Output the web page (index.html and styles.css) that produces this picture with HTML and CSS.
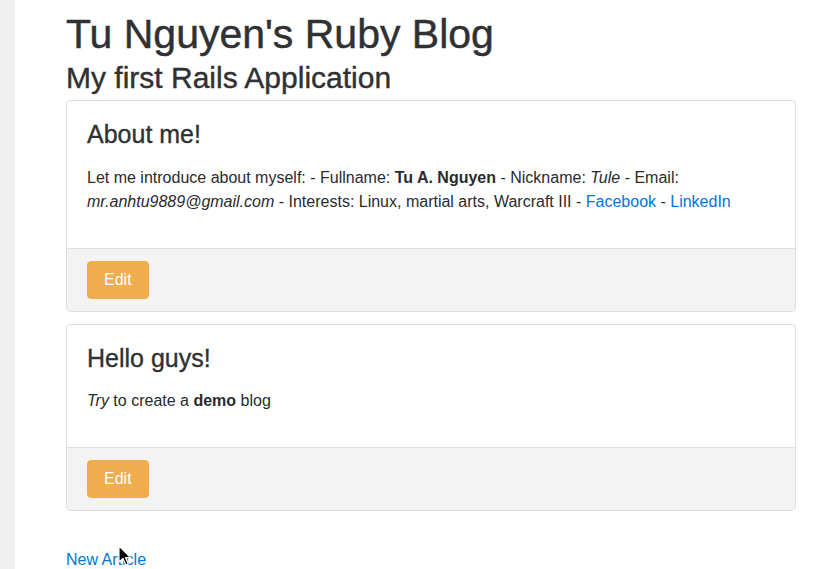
FILE: index.html
```html
<!DOCTYPE html>
<html>
<head>
<meta charset="utf-8">
<title>Tu Nguyen's Ruby Blog</title>
<link rel="stylesheet" href="styles.css">
</head>
<body>
<div class="page">
  <div class="strip"></div>
  <main class="container">
    <h1 class="site-title">Tu Nguyen's Ruby Blog</h1>
    <h2 class="site-sub">My first Rails Application</h2>

    <div class="card">
      <div class="card-body">
        <h4 class="card-title">About me!</h4>
        <p class="card-text">Let me introduce about myself: - Fullname: <strong>Tu A. Nguyen</strong> - Nickname: <em>Tule</em> - Email: <em>mr.anhtu9889@gmail.com</em> - Interests: Linux, martial arts, Warcraft III - <a href="#">Facebook</a> - <a href="#">LinkedIn</a></p>
      </div>
      <div class="card-footer">
        <a class="btn" href="#">Edit</a>
      </div>
    </div>

    <div class="card">
      <div class="card-body">
        <h4 class="card-title">Hello guys!</h4>
        <p class="card-text"><em>Try</em> to create a <strong>demo</strong> blog</p>
      </div>
      <div class="card-footer">
        <a class="btn" href="#">Edit</a>
      </div>
    </div>

    <p class="new-link"><a href="#">New Article</a></p>
  </main>
</div>
<svg class="cursor" width="14" height="22" viewBox="0 0 14 22" xmlns="http://www.w3.org/2000/svg">
  <path d="M1 1 L1 17 L5 13.5 L7.8 20 L10.2 19 L7.5 12.6 L12.5 12.6 Z" fill="#000" stroke="#fff" stroke-width="1.2" stroke-linejoin="round"/>
</svg>
</body>
</html>
```

FILE: styles.css
```css
html, body {
  margin: 0;
  padding: 0;
  background: #fff;
}

body {
  font-family: "Liberation Sans", Arial, Helvetica, sans-serif;
  font-size: 16px;
  line-height: 1.5;
  color: #292b2c;
  overflow: hidden;
  height: 569px;
}

.page {
  display: flex;
  min-height: 569px;
}

.strip {
  width: 15px;
  flex: none;
  background: #efefef;
}

.container {
  padding-left: 51px;
  width: 730px;
  padding-top: 12px;
}

.site-title,
.site-sub,
.card-title {
  font-weight: 500;
  line-height: 1.1;
  color: #2f3133;
  -webkit-text-stroke: 0.45px #2f3133;
}

.site-title {
  font-size: 41px;
  margin: 0 0 4px;
}

.site-sub {
  font-size: 30px;
  margin: 0 0 6px;
  -webkit-text-stroke-width: 0.4px;
}

.card {
  border: 1px solid #dfdfdf;
  border-radius: 4px;
  margin-bottom: 12px;
  background: #fff;
  overflow: hidden;
}

.card-body {
  padding: 20px 20px 18px;
}

.card-title {
  font-size: 25px;
  margin: 0 0 17px;
  -webkit-text-stroke-width: 0.35px;
}

.card-text {
  margin: 0 0 16px;
}

.card-footer {
  background: #f3f3f3;
  border-top: 1px solid #dfdfdf;
  padding: 12px 20px;
}

.btn {
  display: inline-block;
  background: #f0ad4e;
  border: 1px solid #f0ad4e;
  border-radius: 4px;
  color: #fff;
  text-decoration: none;
  padding: 8px 16px;
  line-height: 20px;
  font-size: 16px;
}

a {
  color: #0275d8;
  text-decoration: none;
}

.new-link {
  margin: 37px 0 0;
}

.cursor {
  position: absolute;
  left: 118px;
  top: 545px;
}
```
